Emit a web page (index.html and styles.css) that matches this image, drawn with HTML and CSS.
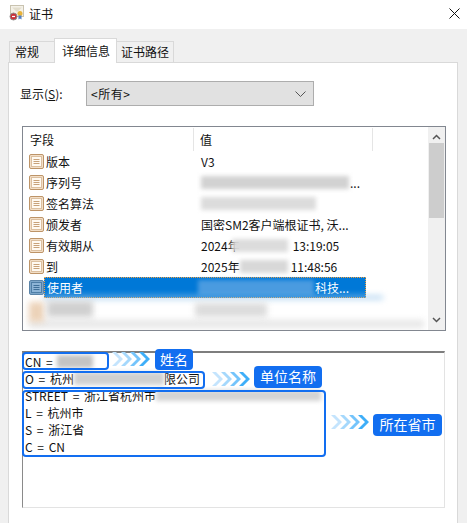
FILE: index.html
```html
<!DOCTYPE html>
<html lang="zh-CN">
  <head>
    <meta charset="utf-8">
    <title>证书</title>
    <link rel="stylesheet" href="styles.css">
  </head>

  <body>
    <svg class="defs" width="0" height="0">
      <symbol id="field" viewBox="0 0 15 15">
        <rect x="0.500" y="0.500" width="14" height="14" rx="1.500" fill="#f3dfc8" stroke="#bd9468"/>
        <rect x="2.500" y="2.500" width="10" height="10" fill="#fffaf2" stroke="#dcc0a0"/>
        <path d="M4.500 5.500h6M4.500 7.500h6M4.500 9.500h6" stroke="#c8a27a"/>
      </symbol>
      <symbol id="field-on" viewBox="0 0 15 15">
        <rect x="0.500" y="0.500" width="14" height="14" rx="1.500" fill="#7da6c9" stroke="#5b84a8"/>
        <rect x="2.500" y="2.500" width="10" height="10" fill="#8db4d6" stroke="#4f7ea6"/>
        <path d="M4.500 5.500h6M4.500 7.500h6M4.500 9.500h6" stroke="#3f6f98"/>
      </symbol>
      <symbol id="chevrons" viewBox="0 0 39 14">
        <path d="M0 0l7 7-7 7h4l7-7-7-7z" fill="#c4e4fd"/>
        <path d="M9 0l7 7-7 7h4l7-7-7-7z" fill="#a5d8fc"/>
        <path d="M18 0l7 7-7 7h4l7-7-7-7z" fill="#74c4fb"/>
        <path d="M27 0l7 7-7 7h4l7-7-7-7z" fill="#3eaef8"/>
      </symbol>
    </svg>

    <header class="titlebar">
      <svg class="cert-icon" width="16" height="16" viewBox="0 0 16 16">
        <rect x="1.500" y="0.500" width="13" height="11" fill="#f4f1e8" stroke="#c9c3b0"/>
        <path d="M3 2.500h10L8 7z" fill="#e2ddcc"/>
        <circle cx="4.500" cy="11.500" r="3.500" fill="#c9303a" stroke="#8f8f8f"/>
        <path d="M3 11.500h3" stroke="#fff" stroke-width="1.200"/>
        <circle cx="11" cy="8.500" r="2.500" fill="#e8b23a"/>
        <path d="M9.500 10.500v4l1.500-1 1.500 1v-4z" fill="#4f7fc4"/>
      </svg>
      <span class="title">证书</span>
      <svg class="close" width="11" height="11" viewBox="0 0 11 11">
        <path d="M0.500 0.500l10 10M10.500 0.500l-10 10" stroke="#111" fill="none"/>
      </svg>
    </header>

    <main class="dialog">
      <nav class="tabs">
        <div class="tab tab-first">常规</div>
        <div class="tab active">详细信息</div>
        <div class="tab">证书路径</div>
      </nav>

      <section class="panel">
        <div class="show-row">
          <label class="show-label">显示(<u>S</u>):</label>
          <div class="select">
            <span>&lt;所有&gt;</span>
            <svg width="11" height="6" viewBox="0 0 11 6">
              <path d="M0.500 0.500l5 5 5-5" stroke="#555" fill="none"/>
            </svg>
          </div>
        </div>

        <div class="list">
          <div class="list-body">
            <div class="list-head">
              <div class="col-field">字段</div>
              <div class="col-value">值</div>
            </div>
            <div class="row">
              <svg class="ico"><use href="#field"/></svg>
              <div class="name">版本</div>
              <div class="value">V3</div>
            </div>
            <div class="row">
              <svg class="ico"><use href="#field"/></svg>
              <div class="name">序列号</div>
              <div class="value"><i class="smear smear-serial"></i>...</div>
            </div>
            <div class="row">
              <svg class="ico"><use href="#field"/></svg>
              <div class="name">签名算法</div>
              <div class="value"><i class="smear smear-algo"></i></div>
            </div>
            <div class="row">
              <svg class="ico"><use href="#field"/></svg>
              <div class="name">颁发者</div>
              <div class="value">国密SM2客户端根证书, 沃...</div>
            </div>
            <div class="row">
              <svg class="ico"><use href="#field"/></svg>
              <div class="name">有效期从</div>
              <div class="value">2024年<i class="smear smear-date"></i>13:19:05</div>
            </div>
            <div class="row">
              <svg class="ico"><use href="#field"/></svg>
              <div class="name">到</div>
              <div class="value">2025年<i class="smear smear-date2"></i>11:48:56</div>
            </div>
            <div class="row selected">
              <svg class="ico"><use href="#field-on"/></svg>
              <div class="sel-bar">
                <div class="name">使用者</div>
                <div class="value"><i class="smear smear-subject"></i>科技...</div>
              </div>
            </div>
            <div class="hidden-rows">
              <i class="blob blob-c"></i>
              <i class="blob blob-e"></i>
              <i class="blob blob-a"></i>
              <i class="blob blob-b"></i>
              <i class="blob blob-d"></i>
            </div>
          </div>
          <div class="scrollbar">
            <svg width="9" height="6" viewBox="0 0 9 6"><path d="M1 5l3.500-3.500L8 5" stroke="#555" stroke-width="1.500" fill="none"/></svg>
            <div class="thumb"></div>
            <svg width="9" height="6" viewBox="0 0 9 6"><path d="M1 1l3.500 3.500L8 1" stroke="#555" stroke-width="1.500" fill="none"/></svg>
          </div>
        </div>

        <div class="detail">
          <div class="line">CN = <i class="smear smear-cn"></i></div>
          <div class="line">O = 杭州<i class="smear smear-org"></i>限公司</div>
          <div class="line">STREET = 浙江省杭州市<i class="smear smear-street"></i></div>
          <div class="line">L = 杭州市</div>
          <div class="line">S = 浙江省</div>
          <div class="line">C = CN</div>
        </div>
      </section>
    </main>

    <div class="frame frame-cn"></div>
    <div class="frame frame-o"></div>
    <div class="frame frame-addr"></div>
    <svg class="arrows arrows-cn"><use href="#chevrons"/></svg>
    <svg class="arrows arrows-o"><use href="#chevrons"/></svg>
    <svg class="arrows arrows-addr"><use href="#chevrons"/></svg>
    <div class="tag tag-cn">姓名</div>
    <div class="tag tag-o">单位名称</div>
    <div class="tag tag-addr">所在省市</div>
  </body>
</html>
```

FILE: styles.css
```css
html, body {
  margin: 0;
  height: 523px;
  overflow: hidden;
  background: #fff;
}
body {
  position: relative;
  font-family: "Noto Sans CJK SC", "Noto Sans", sans-serif;
  font-size: 12px;
  color: #111;
}
.defs {
  position: absolute;
}
.titlebar {
  height: 29px;
  display: flex;
  align-items: center;
  padding: 0 6px 3px 9px;
  box-sizing: border-box;
}
.title {
  margin-left: 4px;
}
.close {
  margin-left: auto;
  margin-right: 1px;
}
.dialog {
  background: #f0f0f0;
  height: 494px;
  padding: 9px 9px 0 8px;
  box-sizing: border-box;
}
.tabs {
  display: flex;
  align-items: flex-end;
  height: 24px;
  padding-left: 1px;
}
.tab {
  height: 21px;
  line-height: 20px;
  padding: 0 0 0 4px;
  border: 1px solid #d9d9d9;
  border-bottom: 0;
  border-left: 0;
  box-sizing: border-box;
  width: 57px;
  white-space: nowrap;
}
.tab-first {
  width: 46px;
  border-left: 1px solid #d9d9d9;
  padding-left: 5px;
}
.tab.active {
  width: 63px;
  height: 25px;
  line-height: 24px;
  background: #fff;
  padding-left: 7px;
  margin-bottom: -1px;
  position: relative;
  border-left: 1px solid #d9d9d9;
  margin-left: -1px;
}
.panel {
  background: #fff;
  border: 1px solid #d9d9d9;
  height: 480px;
  padding: 18px 12px 0 13px;
  box-sizing: border-box;
}
.show-row {
  display: flex;
  align-items: center;
  height: 25px;
}
.show-label {
  width: 64px;
  flex-shrink: 0;
  margin-left: -2px;
  margin-right: 2px;
}
.select {
  width: 228px;
  height: 25px;
  background: #e1e1e1;
  border: 1px solid #adadad;
  box-sizing: border-box;
  display: flex;
  align-items: center;
  justify-content: space-between;
  padding: 0 4px 0 4px;
}
.select span {
  letter-spacing: 0.5px;
}
.select svg {
  margin-right: 3px;
}
.list {
  margin: 20px 0 0 0;
  width: 424px;
  height: 205px;
  border: 1px solid #828790;
  box-sizing: border-box;
  display: flex;
}
.list-body {
  width: 405px;
  flex-shrink: 0;
  position: relative;
  overflow: hidden;
}
.list-head {
  display: flex;
  height: 24px;
  line-height: 23px;
  padding-top: 1px;
  box-sizing: border-box;
}
.col-field {
  width: 171px;
  padding-left: 7px;
  box-sizing: border-box;
  border-right: 1px solid #e5e5e5;
}
.col-value {
  padding-left: 6px;
  width: 172px;
  border-right: 1px solid #e5e5e5;
}
.row {
  display: flex;
  align-items: center;
  height: 21px;
  padding-left: 6px;
}
.ico {
  width: 15px;
  height: 15px;
  flex-shrink: 0;
}
.name {
  width: 155px;
  flex-shrink: 0;
  padding-left: 1px;
}
.value {
  display: flex;
  align-items: center;
  white-space: nowrap;
}
.row > .name {
  margin-left: 1px;
}
.selected {
  color: #fff;
}
.sel-bar {
  display: flex;
  align-items: center;
  width: 322px;
  height: 21px;
  background: #0078d7;
  outline: 1px dotted #f0a040;
  outline-offset: -1px;
  padding-left: 2px;
  box-sizing: border-box;
}
.sel-bar .name {
  width: 154px;
}
.smear {
  display: inline-block;
  height: 13px;
  background: #d2d2d2;
  filter: blur(2px);
}
.smear-serial {
  width: 148px;
  margin-right: 1px;
  background: #d2d2d2;
}
.smear-algo {
  width: 115px;
  background: #dcdcdc;
}
.smear-date {
  width: 56px;
  margin: 0 5px 0 -8px;
  background: #dcdcdc;
}
.smear-date2 {
  width: 48px;
  margin: 0 3px 0 0;
  background: #d8d8d8;
}
.smear-subject {
  width: 116px;
  height: 15px;
  margin-left: -3px;
  margin-right: 1px;
  background: #4a9be0;
}
.smear-cn {
  width: 36px;
  background: #c4c4c4;
}
.smear-org {
  width: 90px;
  background: #d0d0d0;
}
.smear-street {
  width: 165px;
  height: 11px;
  background: #d4d4d4;
}
.hidden-rows {
  position: relative;
  height: 32px;
}
.blob {
  position: absolute;
  display: block;
  filter: blur(3px);
}
.blob-a {
  left: 6px;
  top: 4px;
  width: 15px;
  height: 20px;
  background: #ecd2b8;
}
.blob-b {
  left: 24px;
  top: 3px;
  width: 46px;
  height: 16px;
  background: #d0d0d0;
}
.blob-c {
  left: 20px;
  top: -2px;
  width: 340px;
  height: 3px;
  background: #9cc8ec;
}
.blob-d {
  left: 172px;
  top: 5px;
  width: 72px;
  height: 14px;
  background: #dcdcdc;
}
.blob-e {
  left: 6px;
  top: 22px;
  width: 395px;
  height: 8px;
  background: #e6e6e6;
}
.scrollbar {
  flex: 1;
  background: #f0f0f0;
  display: flex;
  flex-direction: column;
  align-items: center;
  justify-content: space-between;
  padding: 7px 0;
  box-sizing: border-box;
}
.thumb {
  width: 15px;
  height: 75px;
  background: #cdcdcd;
  margin-top: 3px;
  margin-bottom: auto;
}
.detail {
  margin-top: 20px;
  width: 423px;
  height: 157px;
  box-sizing: border-box;
  border: 1px solid #e3e3e3;
  border-top: 2px solid #7e7e7e;
  border-left: 1px solid #8a8a8a;
  padding: 0 0 0 2px;
}
.line {
  display: flex;
  align-items: center;
  height: 17px;
  line-height: 17px;
  white-space: pre;
  word-spacing: 2px;
}
.frame {
  position: absolute;
  border: 2px solid #126ef0;
  border-radius: 4px;
  box-sizing: border-box;
}
.frame-cn {
  left: 22px;
  top: 352px;
  width: 87px;
  height: 18px;
}
.frame-o {
  left: 22px;
  top: 371px;
  width: 183px;
  height: 18px;
}
.frame-addr {
  left: 22px;
  top: 390px;
  width: 304px;
  height: 67px;
}
.arrows {
  position: absolute;
  width: 39px;
  height: 14px;
}
.arrows-cn {
  left: 112px;
  top: 352px;
}
.arrows-o {
  left: 212px;
  top: 372px;
}
.arrows-addr {
  left: 331px;
  top: 415px;
}
.tag {
  position: absolute;
  background: #126ef0;
  color: #fff;
  font-size: 14px;
  line-height: 21px;
  height: 22px;
  text-align: center;
  border-radius: 4px;
}
.tag-cn {
  left: 155px;
  top: 349px;
  width: 38px;
  height: 21px;
}
.tag-o {
  left: 254px;
  top: 366px;
  width: 68px;
}
.tag-addr {
  left: 373px;
  top: 414px;
  width: 69px;
}
```
